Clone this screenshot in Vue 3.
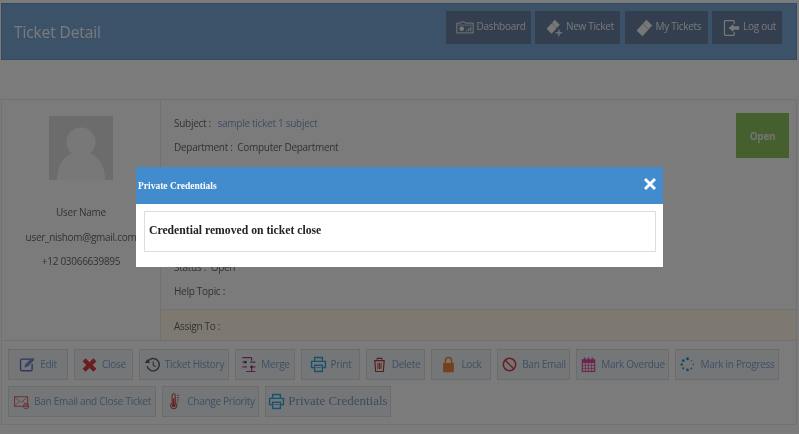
<script setup>
const navItems = [
  { label: 'Dashboard', icon: 'dash', w: 85 },
  { label: 'New Ticket', icon: 'newt', w: 85 },
  { label: 'My Tickets', icon: 'tick', w: 83 },
  { label: 'Log out', icon: 'out', w: 70 },
]
const row1 = [
  { label: 'Edit', icon: 'edit', w: 60 },
  { label: 'Close', icon: 'close', w: 59 },
  { label: 'Ticket History', icon: 'hist', w: 90 },
  { label: 'Merge', icon: 'merge', w: 60 },
  { label: 'Print', icon: 'print', w: 59 },
  { label: 'Delete', icon: 'del', w: 59 },
  { label: 'Lock', icon: 'lock', w: 60 },
  { label: 'Ban Email', icon: 'ban', w: 73 },
  { label: 'Mark Overdue', icon: 'cal', w: 93 },
  { label: 'Mark in Progress', icon: 'spin', w: 104 },
]
const row2 = [
  { label: 'Ban Email and Close Ticket', icon: 'mail', w: 148 },
  { label: 'Change Priority', icon: 'temp', w: 97 },
  { label: 'Private Credentials', icon: 'print', w: 126, serif: true },
]
const ticket = '<path d="M14 1l7 7L9 21l-7-7z" fill="currentColor"/><path d="M9.500 5.500l7 7" stroke="#667e9e" stroke-width="1" stroke-dasharray="2 1.500"/>'
const icons = {
  dash: '<path d="M1 5h5l1-1.500h3L11 5h10v12H1z" fill="none" stroke="currentColor" stroke-width="1.200"/><path d="M2 7.500h18" stroke="currentColor" stroke-width=".8"/><circle cx="7" cy="12" r="2.800" fill="currentColor"/><path d="M12.500 15v-2h1.200v2zM15 15v-4h1.200v4zM17.500 15V9.500h1.200V15z" fill="currentColor"/>',
  newt: '<path d="M12 1l6 6L8 18l-6-6z" fill="currentColor"/><path d="M8 5l6 6" stroke="#667e9e" stroke-dasharray="2 1.500"/><path d="M17 13v8M13 17h8" stroke="currentColor" stroke-width="1.600"/>',
  tick: ticket,
  out: '<path d="M15 6V3a1 1 0 0 0-1-1H4a1 1 0 0 0-1 1v16a1 1 0 0 0 1 1h10a1 1 0 0 0 1-1v-3" fill="none" stroke="currentColor" stroke-width="1.500"/><path d="M14 6v3h7v4h-7v3l-6-5z" fill="currentColor"/>',
  edit: '<path d="M15 4H4a2 2 0 0 0-2 2v11a2 2 0 0 0 2 2h11a2 2 0 0 0 2-2V10" fill="none" stroke="#6d66c4" stroke-width="1.800"/><path d="M8 11l9-9 3 3-9 9-4 1z" fill="#6d8bc4"/>',
  close: '<path d="M6 3l5 5 5-5 4 4-5 4.500 5 5-4 4-5-5-5 5-4-4 5-5-5-4.500z" fill="#d93a3a"/>',
  hist: '<path d="M5 7a8 8 0 1 1-1 6" fill="none" stroke="#5f5f5f" stroke-width="1.800"/><path d="M1 9h7l-3.500-5z" fill="#5f5f5f"/><path d="M12 7v5l3 2" fill="none" stroke="#5f5f5f" stroke-width="1.500"/>',
  merge: '<path d="M3 2h12M3 8h6M13 8h7M3 14h6M13 14h7M8 20h12M15 2v4M15 14v6" stroke="#b23d8a" stroke-width="1.500" fill="none"/><path d="M6 5.500l3 2.500-3 2.500zM16 11.500l-3 2.500 3 2.500z" fill="#444"/>',
  print: '<path d="M6 7V2h10v5M6 15H2V7h18v8h-4" fill="none" stroke="#2ea3d6" stroke-width="1.800"/><rect x="6" y="12" width="10" height="8" fill="none" stroke="#2ea3d6" stroke-width="1.800"/><path d="M8 15h6" stroke="#2ea3d6"/>',
  del: '<path d="M4 6h14M8 5V3h6v2M5 6l1 14h10l1-14" fill="none" stroke="#b23a3a" stroke-width="1.500"/><path d="M9 9v8M11 9v8M13 9v8" stroke="#b23a3a" stroke-width="1.200"/>',
  lock: '<path d="M7 10V6a4 4 0 0 1 8 0v4" fill="none" stroke="#e8823a" stroke-width="2"/><rect x="4" y="9" width="14" height="12" rx="1" fill="#e8823a"/>',
  ban: '<circle cx="11" cy="11" r="8" fill="none" stroke="#d93a4a" stroke-width="2"/><path d="M5.500 5.500l11 11" stroke="#d93a4a" stroke-width="2"/>',
  cal: '<rect x="3" y="5" width="16" height="15" fill="none" stroke="#d84a9a" stroke-width="1.500"/><path d="M3 5h16v4H3z" fill="#d84a9a"/><path d="M6 2v4M11 2v4M16 2v4" stroke="#d84a9a" stroke-width="2"/><path d="M3 12h16M3 16h16M7 9v11M11 9v11M15 9v11" stroke="#d84a9a"/>',
  spin: '<g fill="#2f8fd0"><circle cx="11" cy="3.500" r="2"/><circle cx="5.500" cy="6" r="1.800"/><circle cx="3.500" cy="11" r="1.600"/><circle cx="5.500" cy="16" r="1.500"/><circle cx="11" cy="18" r="1.800"/><circle cx="16" cy="16" r="1.200"/><circle cx="18.500" cy="11" r="1"/><circle cx="16" cy="6" r=".8"/></g>',
  mail: '<path d="M2 5h17v12H2z" fill="none" stroke="#d9646a" stroke-width="1.300"/><path d="M2 5l8.500 7L19 5M2 17l6-6M19 17l-6-6" fill="none" stroke="#d9646a"/><circle cx="17" cy="17" r="3.500" fill="none" stroke="#d9646a" stroke-width="1.200"/><path d="M15 15l4 4" stroke="#d9646a"/>',
  temp: '<path d="M8 3a2 2 0 0 1 4 0v10a4 4 0 1 1-4 0z" fill="none" stroke="#b5544a" stroke-width="1.400"/><path d="M10 7v8" stroke="#c44" stroke-width="2"/><circle cx="10" cy="16" r="2.500" fill="#c44"/><path d="M14 3h3M14 6h3M14 9h3M14 12h2" stroke="#b5544a"/>',
}
</script>

<template>
  <div class="page">
    <header class="topbar">
      <h1 class="title">Ticket Detail</h1>
      <nav class="nav">
        <a v-for="n in navItems" :key="n.label" class="nav-btn" :style="{ width: n.w + 'px' }">
          <svg class="nav-icon" viewBox="0 0 22 22" v-html="icons[n.icon]"></svg>
          <span>{{ n.label }}</span>
        </a>
      </nav>
    </header>

    <section class="panel">
      <div class="upper">
        <aside class="user">
          <div class="avatar">
            <svg viewBox="0 0 64 64" width="64" height="64">
              <rect width="64" height="64" fill="#d9d9d9" />
              <circle cx="32" cy="26" r="14.500" fill="#f1f1f1" />
              <path d="M8 64c0-18 10-28 24-28s24 10 24 28z" fill="#f1f1f1" />
            </svg>
          </div>
          <p class="u-line first">User Name</p>
          <p class="u-line">user_nishom@gmail.com</p>
          <p class="u-line">+12 03066639895</p>
        </aside>
        <div class="details">
          <div class="info">
            <div class="info-lines">
              <p>Subject :&nbsp; <span class="link">sample ticket 1 subject</span></p>
              <p>Department :&nbsp; Computer Department</p>
              <p>Created :&nbsp; 09 December, 22 April 2020</p>
              <p>&nbsp;</p>
              <p>&nbsp;</p>
              <p>&nbsp;</p>
              <p>Status :&nbsp; Open</p>
              <p>Help Topic :</p>
            </div>
            <div class="status">Open</div>
          </div>
          <div class="assign">Assign To :</div>
        </div>
      </div>
      <div class="actions">
        <div class="btn-row">
          <a v-for="b in row1" :key="b.label" class="act" :style="{ width: b.w + 'px' }">
            <svg class="act-icon" viewBox="0 0 22 22" v-html="icons[b.icon]"></svg>
            <span>{{ b.label }}</span>
          </a>
        </div>
        <div class="btn-row">
          <a v-for="b in row2" :key="b.label" class="act" :class="{ serif: b.serif }" :style="{ width: b.w + 'px' }">
            <svg class="act-icon" viewBox="0 0 22 22" v-html="icons[b.icon]"></svg>
            <span>{{ b.label }}</span>
          </a>
        </div>
      </div>
    </section>

    <div class="overlay"></div>
    <div class="modal">
      <div class="modal-head">
        <span class="modal-title">Private Credentials</span>
        <svg class="modal-x" viewBox="0 0 14 14" width="14" height="14">
          <path d="M3 1l4 4 4-4 2 2-4 4 4 4-2 2-4-4-4 4-2-2 4-4-4-4z" fill="#fff" />
        </svg>
      </div>
      <div class="modal-body">
        <div class="modal-box">Credential removed on ticket close</div>
      </div>
    </div>
  </div>
</template>

<style>
html, body { margin: 0; background: #f8f7f7; overflow: hidden; }
</style>

<style scoped>
.page {
  position: relative;
  width: 799px;
  height: 434px;
  overflow: hidden;
  font-family: "Open Sans", sans-serif;
  font-size: 10px;
  letter-spacing: -0.28px;
  color: #666;
  background: #f8f7f7;
  padding: 3px 2px 0 1px;
  box-sizing: border-box;
  filter: blur(0.4px);
}
.topbar {
  height: 57px;
  background: #79a5d3;
  border: 1px solid #6b95c0;
  box-sizing: border-box;
  display: flex;
  align-items: flex-start;
  justify-content: space-between;
  padding-right: 14px;
}
.title {
  margin: 17px 0 0 12px;
  font-size: 15.500px;
  font-weight: 400;
  line-height: 22px;
  letter-spacing: -0.1px;
  color: #f4f4f4;
}
.nav { display: flex; gap: 4.500px; margin-top: 7px; }
.nav-btn {
  height: 33px;
  background: #667e9e;
  color: #eee;
  display: flex;
  align-items: center;
  justify-content: flex-start;
  gap: 3px;
  padding-left: 10px;
  box-sizing: border-box;
  font-size: 10px;
}
.nav-btn span { margin-top: -3px; }
.nav-icon { width: 18px; height: 18px; color: #eee; flex: none; }
.panel {
  margin-top: 39px;
  border: 1px solid #e2e2e2;
  height: 326px;
  box-sizing: border-box;
  display: flex;
  flex-direction: column;
}
.upper { display: flex; height: 241px; border-bottom: 1px solid #e2e2e2; box-sizing: border-box; }
.user {
  width: 159px;
  flex: none;
  border-right: 1px solid #e2e2e2;
  box-sizing: border-box;
  text-align: center;
  padding-top: 16px;
}
.avatar { height: 64px; }
.avatar svg { display: block; margin: 0 auto; }
.u-line { margin: 0 0 10.500px; line-height: 14px; white-space: nowrap; }
.u-line.first { margin-top: 25px; }
.details { flex: 1; display: flex; flex-direction: column; min-width: 0; }
.info { flex: 1; display: flex; justify-content: space-between; padding: 13px 7px 0 13px; }
.info-lines p { margin: 0; height: 24px; line-height: 20px; white-space: nowrap; }
.link { color: #7c9cc6; margin-left: 2px; }
.status {
  width: 53px;
  height: 45px;
  background: #8cbf5d;
  color: #e6e6e6;
  font-weight: 700;
  font-size: 10px;
  display: flex;
  align-items: center;
  justify-content: center;
}
.assign {
  height: 31px;
  background: #fdf3e0;
  border-top: 1px solid #e2e2e2;
  box-sizing: border-box;
  padding-left: 13px;
  line-height: 32px;
}
.actions { flex: 1; padding: 8px 0 0 6px; display: flex; flex-direction: column; gap: 6px; }
.btn-row { display: flex; gap: 6px; }
.act {
  height: 31px;
  background: #e9edf0;
  border: 1px solid #d5d8db;
  box-sizing: border-box;
  color: #7fa0c8;
  display: flex;
  align-items: center;
  justify-content: center;
  gap: 4px;
  white-space: nowrap;
  font-size: 10px;
}
.act span { margin-top: -2px; }
.act-icon { width: 17px; height: 17px; flex: none; }
.act.serif {
  font-family: "Liberation Serif", serif;
  font-size: 13px;
  letter-spacing: 0;
  color: #7e98b8;
  gap: 3px;
}
.overlay {
  position: absolute;
  inset: 0;
  background: rgba(0, 0, 0, 0.5);
}
.modal {
  position: absolute;
  left: 136px;
  top: 167px;
  width: 527px;
  height: 100px;
  background: #fff;
}
.modal-head {
  height: 37px;
  background: #428bcd;
  display: flex;
  align-items: center;
  justify-content: space-between;
  padding: 0 6px 0 2px;
  box-sizing: border-box;
  font-family: "Liberation Serif", serif;
  font-weight: 700;
  font-size: 9.500px;
  letter-spacing: 0;
  color: #fff;
}
.modal-title { padding-top: 1px; }
.modal-x { margin-top: -4px; }
.modal-body { padding: 7px 7px 0 8px; }
.modal-box {
  height: 41px;
  border: 1px solid #ddd;
  box-sizing: border-box;
  padding-left: 4px;
  line-height: 37px;
  font-family: "Liberation Serif", serif;
  font-weight: 700;
  font-size: 11.700px;
  letter-spacing: 0;
  color: #222;
}
</style>
